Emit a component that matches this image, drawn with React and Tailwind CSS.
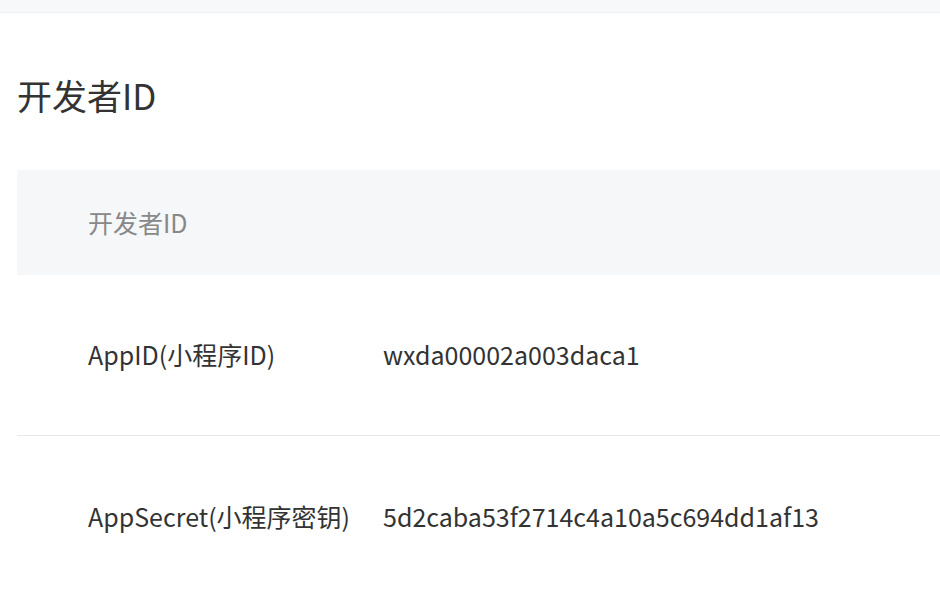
import React from 'react';

const rows = [
  { label: 'AppID(小程序ID)', value: 'wxda00002a003daca1' },
  { label: 'AppSecret(小程序密钥)', value: '5d2caba53f2714c4a10a5c694dd1af13' },
];

export default function App() {
  return (
    <div className="h-[592px] w-[940px] overflow-hidden bg-white" style={{ fontFamily: '"Noto Sans CJK SC", "Noto Sans", sans-serif' }}>
      <div className="h-[13px] border-b border-[#eef0f3] bg-[#f6f8fa]" />
      <div className="pl-[17px]">
        <h1 className="mt-[62px] text-[35px] font-normal leading-[40px] text-[#333]">开发者ID</h1>
        <div className="mt-[55px]">
          <div className="flex h-[105px] items-center bg-[#f6f7f9] pl-[71px] text-[25px] text-[#888]">开发者ID</div>
          {rows.map((r, i) => (
            <div key={i} className={`flex h-[161px] items-center pl-[71px] text-[25px] text-[#333] ${i === 0 ? 'border-b border-[#e8e8e8]' : ''}`}>
              <span className="w-[295px] shrink-0">{r.label}</span>
              <span>{r.value}</span>
            </div>
          ))}
        </div>
      </div>
    </div>
  );
}
